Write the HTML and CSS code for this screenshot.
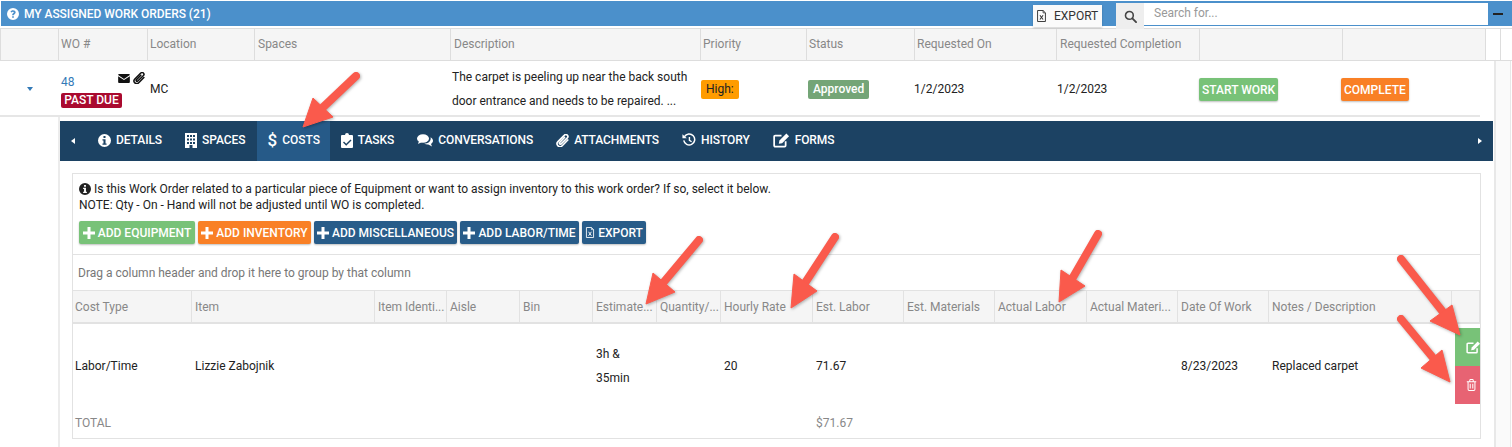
FILE: index.html
```html
<!DOCTYPE html>
<html lang="en">
<head>
<meta charset="utf-8">
<title>My Assigned Work Orders</title>
<link rel="stylesheet" href="styles.css">
</head>
<body>
<svg class="defs" width="0" height="0" aria-hidden="true">
  <symbol id="i-info" viewBox="1 1 14 14"><path fill="currentColor" fill-rule="evenodd" d="M8 1a7 7 0 1 1 0 14A7 7 0 0 1 8 1zM6.900 3.200v2.200h2.200V3.200zM5.800 6.600v1.500h1.100v3.100H5.800v1.500h4.400v-1.500H9.100V6.600z"/></symbol>
  <symbol id="i-file" viewBox="0 0 14 16"><path fill="none" stroke="currentColor" stroke-width="1.200" d="M2 1h7l3 3v11H2z"/><path fill="none" stroke="currentColor" stroke-width="1" d="M9 1v3h3"/><path fill="none" stroke="currentColor" stroke-width="1.300" d="M5 7l4 5.500M9 7l-4 5.500"/></symbol>
  <symbol id="i-clip" viewBox="1.500 1 13 13.500"><path fill="none" stroke="currentColor" stroke-width="1.700" stroke-linecap="round" d="M13.500 7.200l-5.800 6a3 3 0 0 1-4.400-4.300l6.700-6.700a2 2 0 0 1 3 2.800L6.600 11.200a1 1 0 0 1-1.500-1.400l5-5.200"/></symbol>
  <symbol id="i-plus" viewBox="0 0 12 12"><path fill="currentColor" d="M4.500 0h3v4.500H12v3H7.500V12h-3V7.500H0v-3h4.500z"/></symbol>
  <symbol id="i-edit" viewBox="1 1 16 14.500"><path fill="none" stroke="currentColor" stroke-width="1.700" d="M13 9v4.200a1 1 0 0 1-1 1H2.900a1 1 0 0 1-1-1V4.600a1 1 0 0 1 1-1H9"/><path fill="currentColor" d="M7 8.200l6.700-6.700 2.600 2.600-6.700 6.700-3.200.6z"/></symbol>
</svg>

<div class="page">
  <header class="titlebar">
    <div class="title">
      <svg class="ico-12" viewBox="1 1 14 14"><path fill="currentColor" fill-rule="evenodd" d="M8 1a7 7 0 1 1 0 14A7 7 0 0 1 8 1zM7 10.600v1.900h2v-1.900zM8.100 3.500C6.500 3.500 5.500 4.300 5 5.400l1.400.9c.4-.7.800-1 1.500-1 .6 0 1.100.3 1.100.8 0 .5-.4.7-1 1.100C7.300 7.700 7 8.200 7 9.100v.5h2v-.3c0-.5.200-.7.800-1.100.800-.5 1.300-1.100 1.300-2.100 0-1.600-1.400-2.600-3-2.600z"/></svg>
      <span>MY ASSIGNED WORK ORDERS (21)</span>
    </div>
    <div class="tools">
      <button class="export-top"><svg class="ico-file"><use href="#i-file"/></svg>EXPORT</button>
      <span class="search-btn"><svg class="ico-13" viewBox="0 0 14 14"><circle cx="5.800" cy="5.800" r="4.200" fill="none" stroke="currentColor" stroke-width="1.700"/><path d="M9 9l4 4" stroke="currentColor" stroke-width="2" stroke-linecap="round"/></svg></span>
      <span class="search-input">Search for...</span>
      <span class="collapse"></span>
    </div>
  </header>

  <div class="wo-grid wo-head">
    <div></div><div>WO #</div><div>Location</div><div class="pad3">Spaces</div><div class="pad3">Description</div><div>Priority</div><div>Status</div><div>Requested On</div><div class="pad3">Requested Completion</div><div></div><div></div><div class="head-end"></div><div class="head-end"></div>
  </div>

  <div class="wo-body">
    <div class="wo-main">
      <div class="wo-grid wo-row">
        <div class="expander"><span class="caret-down"></span></div>
        <div class="wo-id">
          <div class="wo-id-top">
            <a class="wo-link">48</a>
            <span class="wo-icons">
              <svg class="ico-mail" viewBox="0 0 13 10"><path fill="currentColor" d="M1 0h11a1 1 0 0 1 1 1L6.500 5.500 0 1a1 1 0 0 1 1-1zM0 2.500l6.500 4.300L13 2.500V9a1 1 0 0 1-1 1H1a1 1 0 0 1-1-1z"/></svg>
              <svg class="ico-clip"><use href="#i-clip"/></svg>
            </span>
          </div>
          <span class="badge-due">PAST DUE</span>
        </div>
        <div class="cell-loc">MC</div>
        <div></div>
        <div class="cell-desc">The carpet is peeling up near the back south door entrance and needs to be repaired. ...</div>
        <div class="cell-tag"><span class="tag tag-high">High:</span></div>
        <div class="cell-tag cell-status"><span class="tag tag-approved">Approved</span></div>
        <div class="cell-date">1/2/2023</div>
        <div class="cell-date">1/2/2023</div>
        <div class="cell-btn"><span class="btn btn-green">START WORK</span></div>
        <div class="cell-btn"><span class="btn btn-orange">COMPLETE</span></div>
        <div></div><div></div>
      </div>

      <section class="detail">
        <nav class="tabs">
          <span class="caret-left"></span>
          <a class="tab"><svg class="ico-13"><use href="#i-info"/></svg>DETAILS</a>
          <a class="tab"><svg class="ico-bld" viewBox="0 0 12 15"><path fill="currentColor" fill-rule="evenodd" d="M0 0h12v15H7.500v-3h-3v3H0zM2 2v2h2V2zM5 2v2h2V2zM8 2v2h2V2zM2 5.500v2h2v-2zM5 5.500v2h2v-2zM8 5.500v2h2v-2zM2 9v2h2V9zM5 9v2h2V9zM8 9v2h2V9z"/></svg>SPACES</a>
          <a class="tab tab-active"><span class="dollar">$</span>COSTS</a>
          <a class="tab"><svg class="ico-task" viewBox="0 0 12 15"><path fill="currentColor" fill-rule="evenodd" d="M4 2a2 2 0 0 1 4 0h3a1 1 0 0 1 1 1v11a1 1 0 0 1-1 1H1a1 1 0 0 1-1-1V3a1 1 0 0 1 1-1zM9.500 6.500L5.200 10.800 3 8.600l-1 1 3.200 3.200 5.300-5.300z"/></svg>TASKS</a>
          <a class="tab"><svg class="ico-chat" viewBox="0 0 16 13"><ellipse cx="6" cy="4.500" rx="6" ry="4.300" fill="currentColor"/><path fill="currentColor" d="M2 7l-1 3 4-2zM13.600 3.200C15 4 16 5.200 16 6.700c0 1.300-.8 2.500-2 3.200l1 2.600-3.700-2c-1.500.1-3-.2-4.100-.9 3.900 0 7.200-2.500 6.400-6.400z"/></svg>CONVERSATIONS</a>
          <a class="tab"><svg class="ico-13"><use href="#i-clip"/></svg>ATTACHMENTS</a>
          <a class="tab"><svg class="ico-14" viewBox="0 0 16 16"><path fill="none" stroke="currentColor" stroke-width="1.700" d="M2.800 4.200A6.300 6.300 0 1 1 2 8.500"/><path fill="currentColor" d="M.5 1.500L5.500 6H.5z"/><path fill="none" stroke="currentColor" stroke-width="1.600" d="M8.500 4.500V8.500L11 10"/></svg>HISTORY</a>
          <a class="tab"><svg class="ico-form"><use href="#i-edit"/></svg>FORMS</a>
          <span class="caret-right"></span>
        </nav>

        <div class="panel">
          <div class="panel-box">
            <div class="notice">
              <p><svg class="ico-12i"><use href="#i-info"/></svg> Is this Work Order related to a particular piece of Equipment or want to assign inventory to this work order? If so, select it below.</p>
              <p>NOTE: Qty - On - Hand will not be adjusted until WO is completed.</p>
              <div class="actions">
                <span class="btn btn-act btn-green w-116"><svg class="ico-plus"><use href="#i-plus"/></svg>ADD EQUIPMENT</span>
                <span class="btn btn-act btn-orange w-113"><svg class="ico-plus"><use href="#i-plus"/></svg>ADD INVENTORY</span>
                <span class="btn btn-act btn-navy w-143"><svg class="ico-plus"><use href="#i-plus"/></svg>ADD MISCELLANEOUS</span>
                <span class="btn btn-act btn-navy w-119"><svg class="ico-plus"><use href="#i-plus"/></svg>ADD LABOR/TIME</span>
                <span class="btn btn-act btn-navy w-64"><svg class="ico-file-sm"><use href="#i-file"/></svg>EXPORT</span>
              </div>
            </div>
            <div class="groupbar">Drag a column header and drop it here to group by that column</div>
            <div class="cost-grid cost-head">
              <div>Cost Type</div><div>Item</div><div>Item Identi...</div><div>Aisle</div><div>Bin</div><div>Estimate...</div><div>Quantity/...</div><div>Hourly Rate</div><div>Est. Labor</div><div>Est. Materials</div><div>Actual Labor</div><div>Actual Materi...</div><div>Date Of Work</div><div>Notes / Description</div><div></div>
            </div>
            <div class="cost-grid cost-row">
              <div>Labor/Time</div><div>Lizzie Zabojnik</div><div></div><div></div><div></div><div class="two-line">3h &amp;<br>35min</div><div></div><div>20</div><div>71.67</div><div></div><div></div><div></div><div>8/23/2023</div><div>Replaced carpet</div>
              <div class="row-actions">
                <span class="act act-edit"><svg class="ico-act-edit"><use href="#i-edit"/></svg></span>
                <span class="act act-del"><svg class="ico-trash" viewBox="0 0 12 14"><path fill="none" stroke="currentColor" stroke-width="1.200" d="M2 3.500V12a1.300 1.300 0 0 0 1.300 1.300h5.400A1.300 1.300 0 0 0 10 12V3.500M.5 3.200h11M4 3V1.300A.6.600 0 0 1 4.600.7h2.800a.6.600 0 0 1 .6.600V3M4.500 5.500v5.500M7.500 5.500v5.500"/></svg></span>
              </div>
            </div>
            <div class="cost-grid cost-total">
              <div>TOTAL</div><div></div><div></div><div></div><div></div><div></div><div></div><div></div><div>$71.67</div><div></div><div></div><div></div><div></div><div></div><div></div>
            </div>
          </div>
        </div>
      </section>
    </div>
    <div class="scroll-track"></div>
  </div>
</div>

<svg class="arrows" viewBox="0 0 1512 447" aria-hidden="true">
  <g class="arrow"><path class="shaft" d="M356 76L318 112"/><path class="head" d="M303 127L313 98L333 117z"/></g>
  <g class="arrow"><path class="shaft" d="M699 240L663 283"/><path class="head" d="M646 304L653 273L675 292z"/></g>
  <g class="arrow"><path class="shaft" d="M835 237L805 283"/><path class="head" d="M791 308L794 274L817 291z"/></g>
  <g class="arrow"><path class="shaft" d="M1098 234L1072 279"/><path class="head" d="M1059 302L1061 270L1085 286z"/></g>
  <g class="arrow"><path class="shaft" d="M1401 259L1443 312"/><path class="head" d="M1460 335L1452 305L1430 321z"/></g>
  <g class="arrow"><path class="shaft" d="M1401 319L1434 359"/><path class="head" d="M1450 382L1442 350L1421 368z"/></g>
</svg>
</body>
</html>
```
FILE: styles.css
```css
* { box-sizing: border-box; }
html, body { margin: 0; padding: 0; height: 447px; overflow: hidden; background: #fff; }
body { position: relative; font-family: Roboto, "Liberation Sans", sans-serif; font-size: 12px; color: #222; }
.defs { position: absolute; }
svg { display: block; flex: none; }
p { margin: 0; }

.page { width: 1512px; padding-top: 1px; }

/* Title bar */
.titlebar { height: 25px; margin-left: 1px; background: #4b90cb; color: #fff; display: flex; justify-content: space-between; }
.title { display: flex; align-items: center; gap: 5px; padding-left: 6px; font-weight: 500; font-size: 12px; letter-spacing: -.05px; }
.ico-12 { width: 12px; height: 12px; }
.ico-13 { width: 13px; height: 13px; }
.ico-14 { width: 14px; height: 14px; }
.tools { display: flex; align-items: flex-start; padding-top: 2px; }
.export-top { width: 69px; height: 22px; margin: 2px 14px 0 0; padding: 0 0 0 3px; border: 0; background: #fafafa; color: #333; font: 12px Roboto, sans-serif; display: flex; align-items: center; gap: 7px; box-shadow: 0 1px 2px rgba(0,0,0,.2); }
.ico-file { width: 11px; height: 14px; }
.search-btn { width: 28px; height: 26px; background: #eee; color: #444; display: flex; align-items: center; justify-content: center; }
.search-input { width: 344px; height: 23px; background: #fff; border-bottom: 1px solid #4b90cb; color: #999; padding: 0 10px; line-height: 20px; }
.collapse { width: 10px; height: 2px; background: #222; margin: 10px 9px 0 5px; }

/* Work order grid */
.wo-grid { display: grid; grid-template-columns: 58px 89px 107px 196px 250px 106px 108px 142px 143px 143px 143px 15px 11px; }
.wo-head { height: 33px; margin-top: 2px; background: #f5f5f5; border-top: 1px solid #ddd; border-bottom: 1px solid #ddd; border-left: 1px solid #ddd; color: #888; line-height: 31px; }
.wo-head > div { padding-left: 2px; border-right: 1px solid #ddd; white-space: nowrap; }
.wo-head > .pad3 { padding-left: 3px; }
.wo-head > .head-end { background: #fff; }
.wo-head > div:last-child { border-right: 0; }

.wo-body { display: flex; height: 386px; }
.wo-main { width: 1493px; flex: none; display: flex; flex-direction: column; }
.scroll-track { flex: 1; background: linear-gradient(90deg, #fff 0 1px, #e8e8e8 1px 3px, #fafafa 3px 17px, #e8e8e8 17px 18px, #fff 18px); }

.wo-row { flex: none; height: 56px; width: 1480px; grid-template-columns: 59px 89px 107px 196px 250px 106px 107px 143px 142px 142px 139px 0 0; border-bottom: 2px solid #e6e6e6; }
.expander { display: flex; align-items: center; justify-content: center; padding: 1px 0 0 1px; }
.caret-down { width: 0; height: 0; border: 3px solid transparent; border-top: 4px solid #337ab7; border-bottom: 0; }
.wo-id { padding: 13px 0 0 2px; }
.wo-id-top { display: flex; justify-content: space-between; height: 18px; padding-right: 3px; }
.wo-link { color: #337ab7; font-size: 12px; padding-top: 1px; line-height: 14px; }
.wo-icons { display: flex; gap: 3px; margin-top: -2px; height: 13px; color: #111; }
.ico-mail { width: 12px; height: 9px; margin-top: 2px; }
.ico-clip { width: 12px; height: 12px; }
.badge-due { display: inline-block; width: 61px; height: 15px; background: #aa0a2f; color: #fff; font-weight: 500; line-height: 15px; text-align: center; border-radius: 2px; margin-top: 1px; }
.cell-loc { display: flex; align-items: center; padding: 2px 0 0 2px; }
.cell-date { display: flex; align-items: center; padding-top: 1px; }
.cell-desc { padding: 4px 4px 0 1px; line-height: 24px; }
.cell-tag { display: flex; align-items: center; padding-top: 3px; }
.cell-status { padding-left: 1px; }
.tag { height: 19px; line-height: 19px; border-radius: 2px; padding: 0 5px; }
.tag-high { background: #ff9c00; color: #222; }
.tag-approved { background: #74a577; color: #fff; font-weight: 500; }
.cell-btn { display: flex; align-items: center; padding-top: 3px; }
.cell-btn .btn { height: 23px; padding: 0 3px; }

.btn { display: inline-flex; align-items: center; justify-content: center; color: #fff; font-weight: 500; border-radius: 2px; box-shadow: 0 1px 2px rgba(0,0,0,.25); white-space: nowrap; }
.btn-green { background: #78c278; }
.btn-orange { background: #f98026; }
.btn-navy { background: #285c89; }

/* Detail */
.detail { flex: 1; margin-left: 58px; padding-top: 4px; border-left: 2px solid #ececec; }
.tabs { height: 40px; background: #1c4263; color: #fff; display: flex; align-items: stretch; position: relative; padding-left: 27px; }
.caret-left, .caret-right { position: absolute; top: 17px; width: 0; height: 0; border: 3px solid transparent; }
.caret-left { left: 11px; border-right: 4px solid #fff; border-left: 0; }
.caret-right { right: 11px; border-left: 4px solid #fff; border-right: 0; }
.tab { display: flex; align-items: center; gap: 5px; padding: 0 11px 2px; margin-right: 1px; font-weight: 500; font-size: 12px; letter-spacing: -.08px; }
.tab-active { background: #265a88; padding: 0 10px 2px; margin-right: 0; }
.dollar { font-size: 17px; font-weight: 500; width: 10px; text-align: center; }
.ico-bld { width: 12px; height: 15px; }
.ico-task { width: 12px; height: 15px; }
.ico-chat { width: 16px; height: 13px; }
.ico-form { width: 17px; height: 15px; }

.panel { padding: 12px 12px 0; }
.panel-box { width: 1409px; height: 266px; border: 1px solid #e2e2e2; }
.notice { height: 81px; padding: 7px 0 0 6px; border-bottom: 1px solid #e2e2e2; line-height: 16px; color: #222; }
.notice p { white-space: nowrap; }
.ico-12i { display: inline-block; width: 12px; height: 12px; vertical-align: -2px; }
.actions { display: flex; gap: 3px; margin-top: 8px; }
.btn-act { height: 23px; gap: 3px; }
.w-116 { width: 116px; } .w-113 { width: 113px; } .w-143 { width: 143px; } .w-119 { width: 119px; } .w-64 { width: 64px; }
.ico-plus { width: 12px; height: 12px; }
.ico-file-sm { width: 10px; height: 13px; }
.groupbar { height: 36px; padding: 11px 0 0 5px; color: #777; line-height: 14px; border-bottom: 1px solid #e2e2e2; }

.cost-grid { display: grid; grid-template-columns: 119px 183px 72px 73px 73px 64px 64px 92px 91px 91px 92px 91px 91px 183px 28px; }
.cost-grid > div { padding-left: 3px; white-space: nowrap; overflow: hidden; }
.cost-grid > div:first-child { padding-left: 2px; }
.cost-head { height: 33px; background: #f5f5f5; border-bottom: 2px solid #e2e2e2; color: #888; line-height: 33px; }
.cost-head > div { border-right: 1px solid #e2e2e2; }
.cost-row { height: 84px; line-height: 84px; }
.two-line { line-height: 24px; padding-top: 18px; }
.cost-row > .row-actions { padding: 4px 0 0 3px; display: flex; flex-direction: column; line-height: 1; }
.act { height: 38px; width: 26px; flex: none; display: flex; align-items: center; color: #fff; padding-left: 11px; }
.act-edit { background: #78c278; }
.act-del { background: #e76373; }
.ico-act-edit { width: 15px; height: 13px; flex: none; }
.ico-trash { width: 11px; height: 12px; flex: none; }
.cost-total { height: 30px; color: #888; line-height: 30px; }

/* Annotation arrows */
.arrows { position: absolute; left: 0; top: 0; width: 1512px; height: 447px; pointer-events: none; }
.arrow { filter: drop-shadow(1px 1px 1.5px rgba(0,0,0,.3)); }
.shaft { fill: none; stroke: #fa5a4c; stroke-width: 8; stroke-linecap: round; }
.head { fill: #fa5a4c; stroke: #fa5a4c; stroke-width: 1; stroke-linejoin: round; }
```
